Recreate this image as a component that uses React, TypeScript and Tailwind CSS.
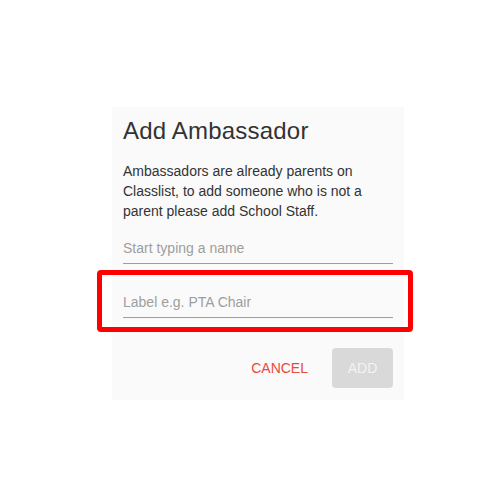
export default function App() {
  return (
    <div
      className="min-h-[500px] w-[500px] bg-white pl-[112px] pt-[107px]"
      style={{ fontFamily: '"Liberation Sans", Arial, sans-serif' }}
    >
      <div className="relative w-[292px] bg-[#fafafa] px-[11px] pb-[12px] pt-[10px]">
        <h2 className="mb-4 text-[24px] leading-[28px] tracking-[0.2px] text-[#333333]">Add Ambassador</h2>
        <p className="text-[14px] leading-[20px] text-[#333333]">
          Ambassadors are already parents on Classlist, to add someone who is not a parent please
          add School Staff.
        </p>

        <input
          className="mt-[11px] block h-[32px] w-full border-b border-[#9e9e9e] bg-transparent text-[14px] text-[#333] outline-none placeholder:text-[#9e9e9e]"
          placeholder="Start typing a name"
        />
        <input
          className="mt-[22px] block h-[32px] w-full border-b border-[#9e9e9e] bg-transparent text-[14px] text-[#333] outline-none placeholder:text-[#9e9e9e]"
          placeholder="Label e.g. PTA Chair"
        />

        {/* highlight box */}
        <div className="pointer-events-none absolute left-[-15px] top-[163px] h-[62px] w-[316px] rounded-[4px] border-[5px] border-[#ff0000]" />

        <div className="mt-[30px] flex items-center justify-end gap-[24px]">
          <button className="text-[14px] uppercase text-[#e8493a]">Cancel</button>
          <button
            disabled
            className="h-[40px] w-[61px] rounded-[4px] bg-[#d9d9d9] text-[14px] uppercase text-[#f3f3f3]"
          >
            Add
          </button>
        </div>
      </div>
    </div>
  );
}
